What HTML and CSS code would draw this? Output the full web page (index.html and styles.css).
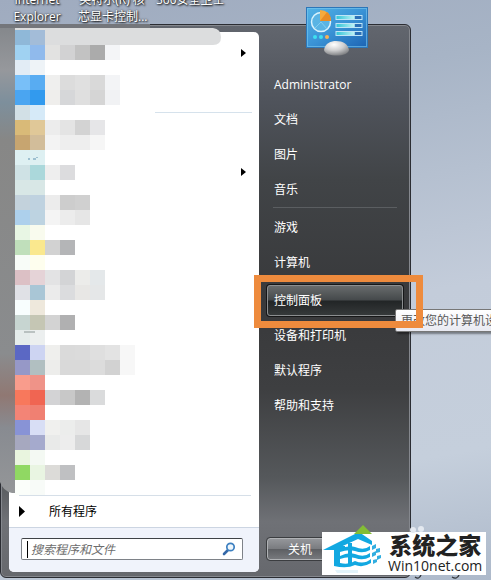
FILE: index.html
```html
<!DOCTYPE html>
<html lang="zh-CN">
<head>
<meta charset="utf-8">
<title>控制面板</title>
<link rel="stylesheet" href="styles.css">
</head>
<body>
<div class="desktop">
 <div class="shortcuts">
  <span class="shortcut">Internet<br>Explorer</span>
  <span class="shortcut">英特尔(R) 核<br>芯显卡控制...</span>
  <span class="shortcut">360安全卫士</span>
 </div>

 <div class="startmenu">
  <div class="left">
   <ul class="programs">
    <li class="more"></li>
    <li></li>
    <li class="line"></li>
    <li></li>
    <li class="more"></li>
   </ul>
   <button type="button" class="all">
    <svg width="6" height="11" viewBox="0 0 6 11"><path d="M0 0L6 5.5L0 11Z"/></svg>
    所有程序
   </button>
   <form class="search">
    <div class="searchbox">
     <input type="text" placeholder="搜索程序和文件" aria-label="搜索程序和文件">
     <svg width="14" height="14" viewBox="0 0 14 14" fill="none">
      <path d="M6 8L2 12" stroke="#3568a8" stroke-width="2.6" stroke-linecap="round"/>
      <circle cx="8.5" cy="5" r="3.7" fill="#eef7fd" stroke="#3c7fc0" stroke-width="1.7"/>
     </svg>
    </div>
   </form>
  </div>

  <div class="right">
   <svg class="userpic" width="64" height="50" viewBox="0 0 64 50">
    <defs>
     <linearGradient id="panel" x1="0" y1="0" x2="1" y2="1">
      <stop offset="0" stop-color="#52b3e6"/><stop offset=".5" stop-color="#3a93d6"/><stop offset="1" stop-color="#1c63b2"/>
     </linearGradient>
     <radialGradient id="knob" cx=".4" cy=".25" r=".8">
      <stop offset="0" stop-color="#fff"/><stop offset=".5" stop-color="#cfcfd0"/><stop offset="1" stop-color="#77797c"/>
     </radialGradient>
     <linearGradient id="bar"><stop offset="0" stop-color="#2ec3d6"/><stop offset=".7" stop-color="#bdf3f5"/><stop offset=".75" stop-color="#2b70b8"/></linearGradient>
    </defs>
    <rect x="1.5" y="1.5" width="61" height="40" fill="url(#panel)" stroke="#2c76b8"/>
    <rect x="2.5" y="2.5" width="59" height="38" fill="none" stroke="#7ccaf0" stroke-opacity=".6"/>
    <circle cx="16" cy="16" r="9.5" fill="#5ab4e4" stroke="#d8f2fc" stroke-width="1.5"/>
    <path d="M16 16L10 22M16 16L22 23" stroke="#82cdf0"/>
    <path d="M15 15V4Q25 4 26 15Z" fill="#f6aa3c"/>
    <path d="M15 15L22 6Q26 9 26 15Z" fill="#e98c24"/>
    <g fill="url(#bar)" stroke="#bfe5f7">
     <rect x="31" y="9.5" width="26" height="4"/>
     <rect x="31" y="17.5" width="26" height="4"/>
     <rect x="31" y="25.5" width="26" height="4"/>
    </g>
    <circle cx="10" cy="31" r="2" fill="#3fe0f0"/>
    <circle cx="16" cy="31" r="2" fill="#3fe0f0"/>
    <circle cx="22" cy="31" r="2" fill="#f7b254"/>
    <path d="M19 44C20 37 26 35 31 35C38 35 43 38 44 44C43 48 38 49.500 32 49.500C25 49.500 20 48 19 44Z" fill="url(#knob)"/>
   </svg>
   <ul class="places">
    <li><a href="#">Administrator</a></li>
    <li><a href="#">文档</a></li>
    <li><a href="#">图片</a></li>
    <li><a href="#">音乐</a></li>
    <li class="line"></li>
    <li><a href="#">游戏</a></li>
    <li><a href="#">计算机</a></li>
    <li class="line"></li>
    <li class="picked">
     <a href="#">控制面板</a>
     <span class="tip">更改您的计算机设置</span>
     <span class="marker"></span>
    </li>
    <li><a href="#">设备和打印机</a></li>
    <li><a href="#">默认程序</a></li>
    <li><a href="#">帮助和支持</a></li>
   </ul>
   <button type="button" class="shutdown">关机</button>
  </div>
 </div>

 <!-- blurred out program names -->
 <svg class="mosaic" width="225" height="495" viewBox="0 0 225 495" aria-hidden="true">
  <defs>
   <linearGradient id="strip" x1="0" y1="0" x2="0" y2="1">
    <stop offset="0" stop-color="#85888c"/><stop offset=".09" stop-color="#96989c"/><stop offset=".16" stop-color="#7d8f9c"/><stop offset=".24" stop-color="#878786"/>
    <stop offset=".7" stop-color="#8a8c8e"/><stop offset=".79" stop-color="#907873"/><stop offset=".86" stop-color="#888b91"/><stop offset="1" stop-color="#949698"/>
   </linearGradient>
  </defs>
  <path d="M0 24H150V30H0Z" fill="#74767b"/>
  <path d="M0 28H15V493H12Q3 491 0 482Z" fill="url(#strip)"/>
  <path d="M15 28H213Q221 29 221 37Q221 45 213 45H15Z" fill="#dcddde"/>
  <g id="cells" shape-rendering="crispEdges"></g>
  <path d="M28 159H30M33 159H36M37 157V158" stroke="#5c8fae"/>
  <path d="M24 332H35" stroke="#8b9695"/>
 </svg>

 <div class="brand">
  <svg class="grass" width="72" height="10" viewBox="0 0 72 10">
   <path d="M0 10L9 1L18 10Z" fill="#83bd35"/>
   <g fill="#e4e9f0"><circle cx="59" cy="6" r="3"/><circle cx="67" cy="5" r="3"/></g>
  </svg>
  <svg class="house" width="60" height="43" viewBox="0 0 60 43">
   <g fill="#12a8e1">
    <path d="M1 18L37 0L50 9V13L36 7L12 18Z"/>
    <path d="M12 14H23V17Q18 17 18 19V31Q27 33 33 29V33Q25 37 12 34Z"/>
    <path d="M26 11H30V32H26Z"/>
    <path d="M18 17Q26 13 33 15Q42 19 48 14V18Q41 22 33 19Q26 17 18 20Z"/>
    <path d="M18 24Q26 20 33 22Q42 26 48 21V25Q41 29 33 26Q26 24 18 27Z"/>
    <path d="M33 29Q42 33 49 27V31Q41 36 33 33Z"/>
   </g>
   <path d="M50 14L54 12V16L50 18ZM54 17L58 16V20L54 21ZM50 21L54 19V23L50 25ZM55 24L59 23V26L55 28ZM51 28L55 27V30L51 32Z" fill="#32aee0"/>
   <path d="M13 38H36V41H15Z" fill="#e2f3fa"/>
  </svg>
  <div class="brandtext">
   <strong>系统之家</strong>
   <span>Win10net.com</span>
  </div>
  <svg class="tails" width="50" height="4" viewBox="0 0 50 4" fill="none" stroke="#30343a" stroke-width="1.3">
   <path d="M1 2Q5 5 7 0M38 2Q43 5 45 0"/>
  </svg>
 </div>
</div>
<script>
 // one line per 15px row, starting at y=45
 var rows = [
  "a0d2f2 90baec e2e2e1 d2d2d3 c2c2c2 ababab f4f5f7",
  "e2ecf5 eef3f7",
  "78bff8 58acf2 efefee dcdcdc e0e0e0 d9d9d9 f3f4f6",
  "4aa5f1 329aee efeeec d6d7d9 dfdfdf d5d5d5 f1f2f4",
  "d2e0e6 d6eaf8",
  "d9ba78 e0c898 ececec e4e4e4 d3d3d3 e6e6e8",
  "c7a570 d2bd9a f3f3f3 eeeeee eeeeee f6f6f6",
  "def0f2 def0f2",
  "cfe2e5 abd8db eeeeee dcdcde",
  "d8e7e6 d8e7e6",
  "c3d2dc bfd2e0 ececec cdcdcd d0d0d0",
  "add0ec bdd3e1 f4f4f4 ececec e6e6e6",
  "e8f6e4 f9fbee",
  "c0dfbb fae88e d2d2d2 b4b5b7",
  "f8fcf8 fefeee",
  "dcc0c5 e5d3d7 e3e3e4 d3d4d6 ececea e4e8ea",
  "e0e1e6 a9c6d6 ebebeb dbdcde e8e7e5 e5e7e8",
  "f8fefe eee8dc",
  "c7d5d1 c5c6b4 d3d3d3 b0b0b1",
  "e5eceb ecefef",
  "5b68c4 cdd4f2 efefed dadada dbdbdb dfdfdf e3e3e3 f7f7f7",
  "9698c7 b1bfc1 ededeb d9d9d9 d9d9d9 dcdcdc d2d2d2 f7f7f7",
  "f99c8c ef9388",
  "f8785c f06552 d3d3d5 c8c8c8 b3b3b3 dadbdc",
  "f38476 f08072",
  "8893d6 d8def5 f0f0ee ecedec e6e6e6",
  "a6a8bf a5aacd e9eae9 ededed d7d8d9",
  "e9f5df f4f9f3",
  "90d863 e9f5e2 dcdbd8 bfc0c2",
  "fbfefa f8fbf8"
 ]
 var cells = document.getElementById("cells")
 function cell(x, y, color) {
  var r = document.createElementNS("http://www.w3.org/2000/svg", "rect")
  r.setAttribute("x", x)
  r.setAttribute("y", y)
  r.setAttribute("width", 15)
  r.setAttribute("height", 15)
  r.setAttribute("fill", "#" + color)
  cells.appendChild(r)
 }
 cell(15, 30, "8fb8d8")
 cell(30, 30, "a3bcd8")
 for (let i = 0; i < rows.length; i++) {
  rows[i].split(" ").forEach((c, n) => cell(15 + n * 15, 45 + i * 15, c))
 }
</script>
</body>
</html>
```
FILE: styles.css
```css
* {
 box-sizing: border-box;
}
body {
 margin: 0;
 font-family: "Open Sans", "Noto Sans CJK SC", sans-serif;
 font-size: 12px;
 line-height: 17px;
}
ul {
 list-style: none;
 margin: 0;
 padding: 0;
}
button, input {
 font: inherit;
}
.desktop {
 position: relative;
 min-height: 100vh;
 display: flex;
 flex-direction: column;
 overflow: hidden;
 background: linear-gradient(170deg, #9fabbf 0%, #a7b4c6 20%, #c3ccda 55%, #c5cfdc 80%, #adb9ca 100%);
}
.shortcuts {
 height: 24px;
 display: flex;
 align-items: flex-end;
 gap: 10px;
 padding-left: 6px;
 color: white;
 text-align: center;
 text-shadow: 1px 1px 2px black, 0 0 2px #333;
}
.shortcut {
 width: 68px;
 height: 34px;
 margin-bottom: -1px;
 white-space: nowrap;
}
.shortcut:first-child {
 width: 62px;
}
.startmenu {
 flex: 1;
 display: grid;
 grid-template-columns: 250fr 151fr;
 margin: 0 80px 2px 0;
 padding: 7px 0 5px 8px;
 border: 1px solid #2b2d33;
 border-radius: 6px;
 box-shadow: inset 0 0 0 1px #85888e;
 background: linear-gradient(#62666e 0%, #4f535b 14%, #414447 28%, #38393b 50%, #3e3f41 66%, #55585b 82%, #6f7176 90%, #66686d 100%);
}
.left {
 display: flex;
 flex-direction: column;
 overflow: hidden;
 background: white;
 border-radius: 5px;
}
.programs {
 flex: 1;
 padding-top: 2px;
}
.programs li {
 height: 37px;
 display: flex;
 align-items: center;
 justify-content: flex-end;
 padding-right: 13px;
}
.programs .more::after {
 content: "";
 border: 4px solid transparent;
 border-left: 5px solid black;
 border-right: 0;
}
.programs .line {
 height: 8px;
 padding-right: 7px;
}
.programs .line::after {
 content: "";
 width: 40%;
 border-top: 1px solid #d6e2ec;
}
.all {
 display: flex;
 align-items: center;
 gap: 24px;
 height: 32px;
 margin: 0 8px 0 10px;
 padding: 0;
 border: 0;
 border-top: 1px solid #d6dfe8;
 background: none;
 color: black;
}
.search {
 padding: 10px 16px 12px 12px;
 background: #f0f3fb;
 border-top: 1px solid #ccd5e2;
}
.searchbox {
 display: flex;
 align-items: center;
 height: 22px;
 padding: 0 6px 0 5px;
 border: 1px solid #7e8288;
 border-top-color: #3f4246;
 border-radius: 2px;
 background: white;
}
.searchbox input {
 flex: 1;
 min-width: 0;
 height: 17px;
 padding: 0 0 0 3px;
 border: 0;
 border-left: 1px solid black;
 outline: 0;
 background: none;
}
.searchbox input::placeholder {
 color: #6d6d6d;
 font-style: italic;
}
.right {
 position: relative;
 display: flex;
 flex-direction: column;
 justify-content: space-between;
 padding: 35px 7px 12px 8px;
}
.userpic {
 position: absolute;
 top: -26px;
 left: 46px;
}
.places li {
 position: relative;
 height: 35px;
 display: flex;
 align-items: center;
}
.places a {
 flex: 1;
 height: 31px;
 padding: 6px;
 border: 1px solid transparent;
 color: white;
 text-decoration: none;
 white-space: nowrap;
}
.places .line {
 height: 3px;
 margin: 0 6px;
 border-top: 1px solid #5b5e61;
}
.places .line ~ .line {
 border-color: transparent;
}
.places .picked a {
 border-color: #8b8e90;
 border-radius: 3px;
 box-shadow: 0 0 0 1px #161718;
 background: linear-gradient(#686b6c, #45494b 48%, #222526 52%, #35393a);
}
.marker {
 position: absolute;
 top: -8px;
 right: -20px;
 bottom: -10px;
 left: -13px;
 border: 7px solid #ee8b3d;
}
.tip {
 position: absolute;
 top: 26px;
 left: calc(100% - 8px);
 padding: 2px 5px;
 border: 1px solid #777;
 border-radius: 2px;
 background: linear-gradient(white, #e8e9f1);
 box-shadow: 2px 2px 2px rgba(0, 0, 0, .4);
 color: #575757;
 white-space: nowrap;
}
.shutdown {
 width: 110px;
 height: 22px;
 padding: 0 0 0 20px;
 border: 1px solid #b0b2b5;
 border-radius: 3px;
 outline: 1px solid #3b3d40;
 background: linear-gradient(#94969a, #7a7c80 48%, #5d5f63 52%, #77797d);
 color: white;
 text-align: left;
}
.mosaic {
 position: absolute;
 top: 0;
 left: 0;
}
.brand {
 position: absolute;
 right: 5px;
 bottom: 5px;
 width: 164px;
 height: 43px;
 display: flex;
 gap: 6px;
 background: white;
}
.grass {
 position: absolute;
 top: -8px;
 left: 32px;
}
.tails {
 position: absolute;
 bottom: -4px;
 left: 92px;
}
.brandtext {
 display: flex;
 flex-direction: column;
 align-items: center;
 color: #222;
}
.brandtext strong {
 font-family: "Noto Sans CJK SC", sans-serif;
 font-size: 23px;
 font-weight: 900;
 line-height: 25px;
}
.brandtext span {
 font-size: 14px;
 line-height: 18px;
}
```
